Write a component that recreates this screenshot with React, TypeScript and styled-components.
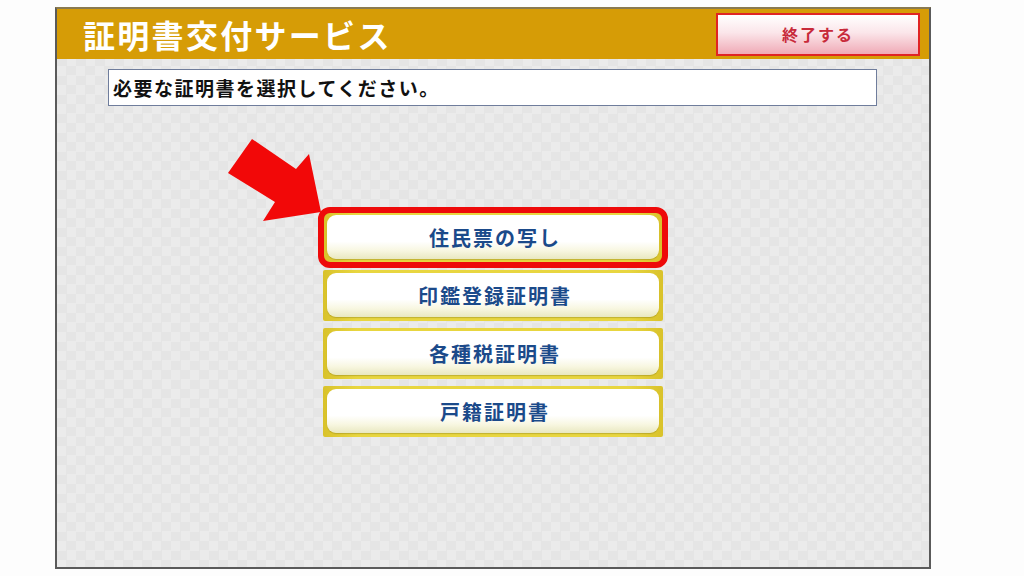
import styled, { createGlobalStyle } from 'styled-components';

const GlobalStyle = createGlobalStyle`
  html, body {
    margin: 0;
    padding: 0;
    background: #fdfdfd;
    font-family: "Noto Sans CJK JP", "Noto Sans", sans-serif;
  }
`;

const certificates = ['住民票の写し', '印鑑登録証明書', '各種税証明書', '戸籍証明書'];

// Outer page, white around the kiosk screen
const Page = styled.div`
  width: 1024px;
  height: 576px;
  padding: 7px 0 0 55px;
  box-sizing: border-box;
`;

// Kiosk screen frame
const Screen = styled.div`
  width: 876px;
  height: 562px;
  box-sizing: border-box;
  border: 2px solid #5a5a5a;
  border-top-color: #8a7a50;
  display: flex;
  flex-direction: column;
  background-color: #e9e9e9;
  background-image: repeating-conic-gradient(#e5e5e5 0% 25%, #ebebeb 0% 50%);
  background-size: 19px 19px;
`;

const Header = styled.div`
  height: 50px;
  background: #d69c06;
  display: flex;
  align-items: center;
  justify-content: space-between;
  padding: 0 9px 0 26px;
  flex-shrink: 0;
`;

const Title = styled.h1`
  margin: 0;
  color: #fff;
  font-size: 32px;
  font-weight: 700;
  letter-spacing: 2.3px;
  line-height: 1;
`;

const EndButton = styled.button`
  width: 204px;
  height: 43px;
  border: 2px solid #e02424;
  background: linear-gradient(to bottom, #ffffff 0%, #fbe6ea 45%, #f0aab6 100%);
  color: #c82a3a;
  font-family: inherit;
  font-size: 16px;
  font-weight: 700;
  letter-spacing: 2px;
  cursor: pointer;
`;

const Instruction = styled.div`
  margin: 10px 52px 0 51px;
  height: 37px;
  box-sizing: border-box;
  border: 1px solid #6f7d9c;
  background: #fff;
  display: flex;
  align-items: center;
  padding-left: 4px;
  color: #111;
  font-size: 19px;
  font-weight: 700;
  letter-spacing: 1.5px;
`;

const Menu = styled.div`
  position: relative;
  margin: 106px 0 0 266px;
  width: 340px;
  display: flex;
  flex-direction: column;
  gap: 7px;
`;

const Arrow = styled.svg`
  position: absolute;
  left: -97px;
  top: -75px;
`;

const CertButton = styled.button<{ $highlighted?: boolean }>`
  position: relative;
  height: 51px;
  padding: 3px 4px 4px;
  border: none;
  border-radius: 2px;
  background: linear-gradient(to right, #d9c22a, #e8d640 10%, #e8d640 90%, #d9c22a);
  cursor: pointer;
  display: flex;

  &::after {
    content: '';
    display: ${(p) => (p.$highlighted ? 'block' : 'none')};
    position: absolute;
    inset: -5px;
    border: 6px solid #ee0a0a;
    border-radius: 12px;
    pointer-events: none;
  }
`;

const CertFace = styled.span`
  flex: 1;
  border-radius: 9px;
  background: linear-gradient(to bottom, #ffffff 0%, #ffffff 60%, #f8f7e2 80%, #e9e8c0 100%);
  box-shadow: 0 1px 1px rgba(120, 110, 20, 0.35);
  display: flex;
  align-items: center;
  justify-content: center;
  padding-left: 4px;
  color: #1b4a8a;
  font-family: "Noto Sans CJK JP", sans-serif;
  font-size: 20px;
  font-weight: 700;
  letter-spacing: 2px;
`;

export default function App() {
  return (
    <>
      <GlobalStyle />
      <Page>
        <Screen>
          <Header>
            <Title>証明書交付サービス</Title>
            <EndButton>終了する</EndButton>
          </Header>
          <Instruction>必要な証明書を選択してください。</Instruction>
          <Menu>
            <Arrow width="98" height="88" viewBox="0 0 98 88">
              <polygon
                points="26,2 70,32 83,17 95,75 37,84 49,65 2,36"
                fill="#f20808"
              />
            </Arrow>
            {certificates.map((name, i) => (
              <CertButton key={name} $highlighted={i === 0}>
                <CertFace>{name}</CertFace>
              </CertButton>
            ))}
          </Menu>
        </Screen>
      </Page>
    </>
  );
}
